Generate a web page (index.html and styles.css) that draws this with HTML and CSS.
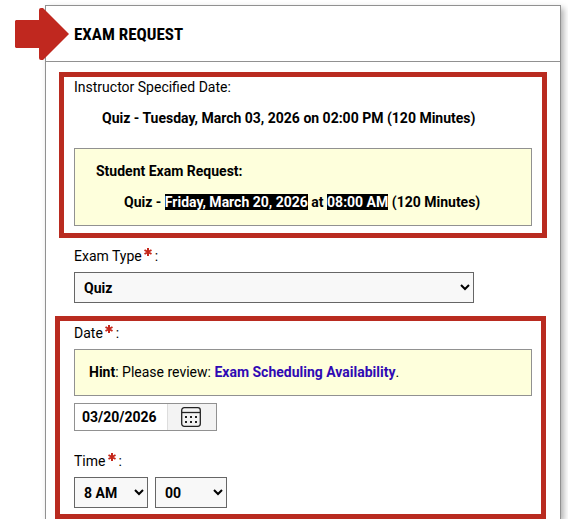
FILE: index.html
```html
<!DOCTYPE html>
<html lang="en">
<head>
    <meta charset="UTF-8">
    <meta name="viewport" content="width=device-width, initial-scale=1.0">
    <title>Exam Request</title>
    <link rel="stylesheet" href="styles.css">
</head>
<body>
    <main class="page">
        <!-- Arrow pointing at the panel title -->
        <svg class="arrow" width="54" height="52" viewBox="0 0 54 52" aria-hidden="true">
            <path d="M1 12H24V2Q24 0 26 0H28L54 26L28 52H26Q24 52 24 50V40H1L0 39V13Z" fill="#c0281f"/>
        </svg>

        <section class="panel">
            <header class="panel-header">
                <h1 class="panel-title">EXAM REQUEST</h1>
            </header>

            <div class="panel-body">
                <!-- Original and requested dates -->
                <div class="callout callout-dates">
                    <p class="text">Instructor Specified Date:</p>
                    <p class="text exam-date">Quiz - Tuesday, March 03, 2026 on 02:00 PM (120 Minutes)</p>
                    <div class="note student-request">
                        <p class="text request-title">Student Exam Request:</p>
                        <p class="text exam-date">Quiz - <mark>Friday, March 20, 2026</mark> at <mark>08:00 AM</mark> (120 Minutes)</p>
                    </div>
                </div>

                <div class="field">
                    <label class="text" for="exam-type">Exam Type <svg class="required" width="8" height="8" viewBox="0 0 8 8" aria-hidden="true"><path d="M4 0V8M0.5 2L7.5 6M0.5 6L7.5 2"/></svg> :</label>
                    <select class="select select-type" id="exam-type">
                        <option>Quiz</option>
                    </select>
                </div>

                <!-- Date and time -->
                <div class="callout callout-schedule">
                    <label class="text" for="exam-date">Date <svg class="required" width="8" height="8" viewBox="0 0 8 8" aria-hidden="true"><path d="M4 0V8M0.5 2L7.5 6M0.5 6L7.5 2"/></svg> :</label>
                    <div class="note hint">
                        <p class="text"><strong>Hint</strong>: Please review: <a class="link" href="#">Exam Scheduling Availability</a>.</p>
                    </div>
                    <div class="date-picker">
                        <input class="date-input" id="exam-date" type="text" value="03/20/2026">
                        <button class="date-button" type="button" aria-label="Open calendar">
                            <svg width="20" height="20" viewBox="0 0 20 20" aria-hidden="true">
                                <rect x="0.7" y="0.7" width="18.6" height="18.6" rx="2.5" fill="none" stroke="#222" stroke-width="1.3"/>
                                <path d="M1 5.5H19" stroke="#222" stroke-width="1.3"/>
                                <path d="M4 9h2v2H4zM9 9h2v2H9zM14 9h2v2h-2zM4 14h2v2H4zM9 14h2v2H9zM14 14h2v2h-2z" fill="#222"/>
                            </svg>
                        </button>
                    </div>
                    <label class="text time-label" for="exam-hour">Time <svg class="required" width="8" height="8" viewBox="0 0 8 8" aria-hidden="true"><path d="M4 0V8M0.5 2L7.5 6M0.5 6L7.5 2"/></svg> :</label>
                    <div class="time-row">
                        <select class="select select-hour" id="exam-hour">
                            <option>8 AM</option>
                        </select>
                        <select class="select select-minute" aria-label="Minutes">
                            <option>00</option>
                        </select>
                    </div>
                </div>
            </div>
        </section>
    </main>
</body>
</html>
```

FILE: styles.css
```css
:root {
    --accent: #b92b20;
    --border: #919191;
    --note-bg: #feffdc;
    --field-bg: #f8f8f8;
    --link: #2f0ab4;
}

* {
    box-sizing: border-box;
}

body {
    margin: 0;
    background-color: #fff;
    color: #000;
    font-family: Roboto, Arial, sans-serif;
    font-size: 14px;
}

.page {
    position: relative;
    padding: 5px 7px 0 45px;
    overflow: hidden;
}

/* Lies over the left edge of the panel */
.arrow {
    position: absolute;
    top: 8px;
    left: 15px;
}

.panel {
    border: 1px solid var(--border);
    border-bottom: 0;
    box-shadow: 3px 3px 6px rgba(0, 0, 0, 0.3);
}

.panel-header {
    padding: 18px 28px 17px;
    border-bottom: 1px solid var(--border);
}

.panel-title {
    margin: 0;
    font-family: "Roboto Condensed", Roboto, Arial, sans-serif;
    font-size: 17px;
    font-weight: 700;
    line-height: 20px;
}

.panel-body {
    padding-top: 10px;
}

.text {
    display: block;
    margin: 0;
    line-height: 20px;
}

/* Red outlined areas */
.callout {
    border: 5px solid var(--accent);
}

.callout-dates {
    margin: 0 13px;
    padding: 0 10px 7px;
}

.callout-schedule {
    margin: 13px 14px 0 9px;
    padding: 2px 9px 6px 14px;
}

.exam-date {
    margin-top: 11px;
    padding-left: 28px;
    font-weight: 700;
}

.note {
    border: 1px solid var(--border);
    background-color: var(--note-bg);
}

.student-request {
    margin-top: 20px;
    padding: 12px 21px 13px;
}

.request-title {
    font-weight: 700;
}

mark {
    background-color: #000;
    color: #fff;
}

.field {
    padding: 8px 28px 0;
}

.required {
    margin: 0 -1px;
    vertical-align: 5px;
    fill: none;
    stroke: #c5281c;
    stroke-width: 2;
}

.select {
    display: block;
    height: 31px;
    margin: 0;
    padding: 0 0 0 5px;
    border: 1px solid #666;
    border-radius: 0;
    background-color: var(--field-bg);
    color: #000;
    font: inherit;
    font-weight: 700;
}

.select-type {
    width: 100%;
    max-width: 400px;
    margin-top: 6px;
}

.hint {
    margin-top: 6px;
    padding: 12px 14px 13px;
}

.link {
    color: var(--link);
    font-weight: 700;
    text-decoration: none;
}

.date-picker {
    display: flex;
    width: 143px;
    height: 28px;
    margin-top: 7px;
    border: 1px solid var(--border);
}

.date-input {
    flex: 1;
    min-width: 0;
    padding: 0 7px 1px;
    border: 0;
    background-color: #fff;
    color: #000;
    font: inherit;
    font-weight: 700;
}

.date-button {
    display: flex;
    align-items: center;
    justify-content: center;
    width: 49px;
    padding: 0 2px 0 0;
    border: 0;
    border-left: 1px solid #ddd;
    background-color: #f3f3f3;
}

.time-label {
    margin-top: 20px;
}

.time-row {
    display: flex;
    gap: 7px;
    margin-top: 6px;
}

.select-hour {
    width: 74px;
}

.select-minute {
    width: 72px;
}
```
